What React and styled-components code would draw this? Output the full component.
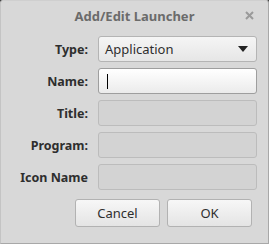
import styled, { createGlobalStyle } from "styled-components";

const Global = createGlobalStyle`
  html, body {
    margin: 0;
    padding: 0;
    background: #3a3a3a;
  }
  * {
    box-sizing: border-box;
  }
`;

const Window = styled.div`
  width: 269px;
  height: 244px;
  background: #d8d8d8;
  border: 1px solid #a8a8a8;
  border-top-color: #cfcfcf;
  border-left-color: #c4c4c4;
  border-radius: 3px 3px 0 0;
  font-family: "Noto Sans", "Open Sans", sans-serif;
  color: #2e2e2e;
  display: flex;
  flex-direction: column;
`;

const TitleBar = styled.div`
  height: 29px;
  position: relative;
  display: flex;
  align-items: center;
  justify-content: center;
  font-weight: bold;
  font-size: 13px;
  color: #6b6b6b;
  padding-top: 1px;
`;

const Close = styled.svg`
  position: absolute;
  right: 14px;
  top: 10px;
  width: 9px;
  height: 9px;
`;

const Form = styled.div`
  display: grid;
  grid-template-columns: 87px 159px;
  column-gap: 10px;
  row-gap: 6px;
  padding: 6px 0 0 0;
`;

const Label = styled.div`
  font-weight: bold;
  font-size: 12.5px;
  text-align: right;
  align-self: center;
  white-space: nowrap;
`;

const Field = styled.div`
  height: 26px;
  border-radius: 3px;
  border: 1px solid ${(p) => (p.$active ? "#9e9e9e" : "#bcbcbc")};
  background: ${(p) =>
    p.$active
      ? "linear-gradient(#ffffff, #ebebeb)"
      : "#d3d3d3"};
  display: flex;
  align-items: center;
  padding: 0 6px;
  font-size: 13px;
`;

const Combo = styled(Field)`
  height: 26px;
  border-color: #b4b4b4;
  background: linear-gradient(#f5f5f5, #e6e6e6);
  justify-content: space-between;
  padding: 0 8px 0 6px;
`;

const Caret = styled.span`
  width: 1px;
  height: 15px;
  background: #000;
  margin-left: 2px;
`;

const Arrow = styled.svg`
  width: 10px;
  height: 6px;
`;

const Buttons = styled.div`
  display: flex;
  gap: 7px;
  padding: 9px 0 0 74px;
`;

const Button = styled.div`
  width: 85px;
  height: 28px;
  border-radius: 3px;
  border: 1px solid #b2b2b2;
  background: linear-gradient(#f7f7f7, #e4e4e4);
  display: flex;
  align-items: center;
  justify-content: center;
  font-size: 13px;
`;

export default function App() {
  return (
    <>
      <Global />
      <Window>
        <TitleBar>
          Add/Edit Launcher
          <Close viewBox="0 0 9 9">
            <path d="M1 1 L8 8 M8 1 L1 8" stroke="#9a9a9a" strokeWidth="2" />
          </Close>
        </TitleBar>
        <Form>
          <Label>Type:</Label>
          <Combo>
            Application
            <Arrow viewBox="0 0 10 6">
              <path d="M0 0 L10 0 L5 6 Z" fill="#222" />
            </Arrow>
          </Combo>
          <Label>Name:</Label>
          <Field $active>
            <Caret />
          </Field>
          <Label>Title:</Label>
          <Field />
          <Label>Program:</Label>
          <Field />
          <Label>Icon Name</Label>
          <Field />
        </Form>
        <Buttons>
          <Button>Cancel</Button>
          <Button>OK</Button>
        </Buttons>
      </Window>
    </>
  );
}
